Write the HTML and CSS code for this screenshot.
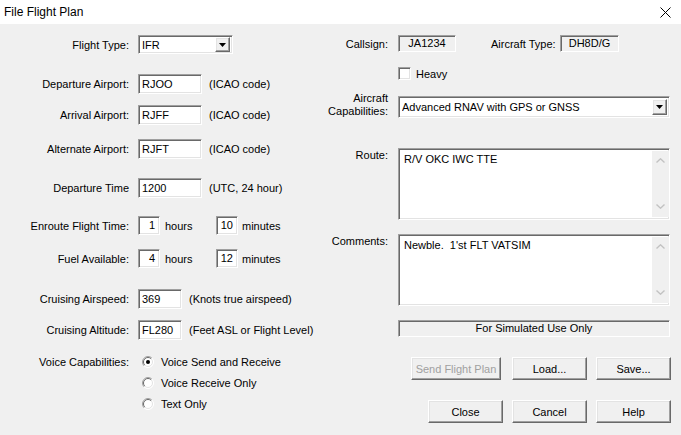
FILE: index.html
```html
<!DOCTYPE html>
<html>
<head>
<meta charset="utf-8">
<link rel="stylesheet" href="styles.css">
</head>
<body>
<div class="window">
  <div class="titlebar">
    <span class="title">File Flight Plan</span>
    <svg class="closex" width="11" height="11" viewBox="0 0 11 11"><path d="M0.5 0.5 L10.5 10.5 M10.5 0.5 L0.5 10.5" stroke="#000" stroke-width="1" fill="none"/></svg>
  </div>
  <div class="body">
    <div class="left">
      <div class="row r-ft">
        <span class="lbl">Flight Type:</span>
        <div class="sunken select sel-ft"><span class="val">IFR</span><span class="arrowbtn"><svg width="7" height="4" viewBox="0 0 7 4"><path d="M0 0 H7 L3.5 4 Z" fill="#000"/></svg></span></div>
      </div>
      <div class="row r-dep">
        <span class="lbl">Departure Airport:</span>
        <div class="sunken input w64">RJOO</div><span class="hint">(ICAO code)</span>
      </div>
      <div class="row r-arr">
        <span class="lbl">Arrival Airport:</span>
        <div class="sunken input w64">RJFF</div><span class="hint">(ICAO code)</span>
      </div>
      <div class="row r-alt">
        <span class="lbl">Alternate Airport:</span>
        <div class="sunken input w64">RJFT</div><span class="hint">(ICAO code)</span>
      </div>
      <div class="row r-time">
        <span class="lbl">Departure Time</span>
        <div class="sunken input w64">1200</div><span class="hint">(UTC, 24 hour)</span>
      </div>
      <div class="row r-enr">
        <span class="lbl">Enroute Flight Time:</span>
        <div class="sunken input small">1</div><span class="unit">hours</span>
        <div class="sunken input small">10</div><span class="unit2">minutes</span>
      </div>
      <div class="row r-fuel">
        <span class="lbl">Fuel Available:</span>
        <div class="sunken input small">4</div><span class="unit">hours</span>
        <div class="sunken input small">12</div><span class="unit2">minutes</span>
      </div>
      <div class="row r-spd">
        <span class="lbl">Cruising Airspeed:</span>
        <div class="sunken input w44">369</div><span class="hint">(Knots true airspeed)</span>
      </div>
      <div class="row r-fl">
        <span class="lbl">Cruising Altitude:</span>
        <div class="sunken input w44">FL280</div><span class="hint">(Feet ASL or Flight Level)</span>
      </div>
      <div class="row r-v1">
        <span class="lbl">Voice Capabilities:</span>
        <span class="radio"><svg width="12" height="12" viewBox="0 0 12 12"><circle cx="6" cy="6" r="5.5" fill="#fff"/><path d="M2.1 9.9 A5.5 5.5 0 0 1 9.9 2.1" stroke="#a0a0a0" fill="none"/><path d="M2.8 9.2 A4.5 4.5 0 0 1 9.2 2.8" stroke="#696969" fill="none"/><path d="M9.9 2.1 A5.5 5.5 0 0 1 2.1 9.9" stroke="#fff" fill="none"/><path d="M9.2 2.8 A4.5 4.5 0 0 1 2.8 9.2" stroke="#e3e3e3" fill="none"/><circle cx="6" cy="6" r="2" fill="#000"/></svg></span>
        <span class="rtext">Voice Send and Receive</span>
      </div>
      <div class="row r-v2">
        <span class="lbl"></span>
        <span class="radio"><svg width="12" height="12" viewBox="0 0 12 12"><circle cx="6" cy="6" r="5.5" fill="#fff"/><path d="M2.1 9.9 A5.5 5.5 0 0 1 9.9 2.1" stroke="#a0a0a0" fill="none"/><path d="M2.8 9.2 A4.5 4.5 0 0 1 9.2 2.8" stroke="#696969" fill="none"/><path d="M9.9 2.1 A5.5 5.5 0 0 1 2.1 9.9" stroke="#fff" fill="none"/><path d="M9.2 2.8 A4.5 4.5 0 0 1 2.8 9.2" stroke="#e3e3e3" fill="none"/></svg></span>
        <span class="rtext">Voice Receive Only</span>
      </div>
      <div class="row r-v3">
        <span class="lbl"></span>
        <span class="radio"><svg width="12" height="12" viewBox="0 0 12 12"><circle cx="6" cy="6" r="5.5" fill="#fff"/><path d="M2.1 9.9 A5.5 5.5 0 0 1 9.9 2.1" stroke="#a0a0a0" fill="none"/><path d="M2.8 9.2 A4.5 4.5 0 0 1 9.2 2.8" stroke="#696969" fill="none"/><path d="M9.9 2.1 A5.5 5.5 0 0 1 2.1 9.9" stroke="#fff" fill="none"/><path d="M9.2 2.8 A4.5 4.5 0 0 1 2.8 9.2" stroke="#e3e3e3" fill="none"/></svg></span>
        <span class="rtext">Text Only</span>
      </div>
    </div>

    <div class="right">
      <div class="row r-cs">
        <span class="rlbl">Callsign:</span>
        <div class="static cs">JA1234</div>
        <span class="actype">Aircraft Type:</span>
        <div class="static at">DH8D/G</div>
      </div>
      <div class="row r-heavy">
        <span class="chk"></span><span class="chktext">Heavy</span>
      </div>
      <div class="row r-caps">
        <span class="rlbl caps-lbl">Aircraft<br>Capabilities:</span>
        <div class="sunken select sel-caps"><span class="val">Advanced RNAV with GPS or GNSS</span><span class="arrowbtn"><svg width="7" height="4" viewBox="0 0 7 4"><path d="M0 0 H7 L3.5 4 Z" fill="#000"/></svg></span></div>
      </div>
      <div class="row r-route">
        <span class="rlbl top-lbl">Route:</span>
        <div class="sunken textarea">
          <div class="ta-text">R/V OKC IWC TTE</div>
          <div class="sb">
            <svg width="9" height="5" viewBox="0 0 9 5"><path d="M0.5 4.5 L4.5 0.8 L8.5 4.5" stroke="#c2c2c2" stroke-width="1.4" fill="none"/></svg>
            <svg width="9" height="5" viewBox="0 0 9 5"><path d="M0.5 0.5 L4.5 4.2 L8.5 0.5" stroke="#c2c2c2" stroke-width="1.4" fill="none"/></svg>
          </div>
        </div>
      </div>
      <div class="row r-comm">
        <span class="rlbl top-lbl">Comments:</span>
        <div class="sunken textarea">
          <div class="ta-text">Newble.&nbsp; 1'st FLT VATSIM</div>
          <div class="sb">
            <svg width="9" height="5" viewBox="0 0 9 5"><path d="M0.5 4.5 L4.5 0.8 L8.5 4.5" stroke="#c2c2c2" stroke-width="1.4" fill="none"/></svg>
            <svg width="9" height="5" viewBox="0 0 9 5"><path d="M0.5 0.5 L4.5 4.2 L8.5 0.5" stroke="#c2c2c2" stroke-width="1.4" fill="none"/></svg>
          </div>
        </div>
      </div>
      <div class="row r-sim">
        <div class="static sim">For Simulated Use Only</div>
      </div>
      <div class="btnrow b1">
        <div class="btn disabled send">Send Flight Plan</div>
        <div class="btn load">Load...</div>
        <div class="btn">Save...</div>
      </div>
      <div class="btnrow b2">
        <div class="btn">Close</div>
        <div class="btn">Cancel</div>
        <div class="btn">Help</div>
      </div>
    </div>
  </div>
</div>
</body>
</html>
```

FILE: styles.css
```css
* { box-sizing: border-box; }
html, body { margin: 0; padding: 0; }
body {
  font-family: "Liberation Sans", Arial, sans-serif;
  font-size: 11px;
  color: #000;
  background: #f0f0f0;
}
.window {
  width: 681px;
  height: 435px;
  background: #f0f0f0;
  overflow: hidden;
}
.titlebar {
  height: 24px;
  background: #fff;
  display: flex;
  align-items: center;
  justify-content: space-between;
  padding: 0 10px 0 4px;
}
.title { font-size: 12px; color: #000; }
.closex { display: block; }

.body { display: flex; }

/* left column */
.left {
  width: 328px;
  flex: none;
  padding-top: 11px;
  display: flex;
  flex-direction: column;
}
.row { display: flex; align-items: center; }
.lbl {
  width: 129px;
  flex: none;
  text-align: right;
  margin-right: 9px;
  white-space: nowrap;
}
.r-ft { height: 19px; }
.r-dep { height: 20px; margin-top: 20px; }
.r-arr { height: 20px; margin-top: 11px; }
.r-alt { height: 20px; margin-top: 14px; }
.r-time { height: 20px; margin-top: 19px; }
.r-enr { height: 19px; margin-top: 18px; }
.r-fuel { height: 19px; margin-top: 14px; }
.r-spd { height: 20px; margin-top: 21px; }
.r-fl { height: 20px; margin-top: 11px; }
.r-v1 { height: 20px; margin-top: 12px; }
.r-v2 { height: 20px; margin-top: 1px; }
.r-v3 { height: 20px; margin-top: 1px; }

.sunken {
  background: #fff;
  border: 1px solid;
  border-color: #a0a0a0 #fff #fff #a0a0a0;
  box-shadow: inset 1px 1px #696969, inset -1px -1px #e3e3e3;
}
.input {
  height: 20px;
  line-height: 18px;
  padding: 0 3px;
  white-space: nowrap;
}
.w64 { width: 64px; }
.w44 { width: 44px; }
.small { width: 22px; height: 19px; line-height: 17px; text-align: right; padding: 0 4px 0 2px; }
.hint { margin-left: 7px; white-space: nowrap; }
.unit { width: 56px; flex: none; padding-left: 5px; }
.unit2 { padding-left: 4px; }

.select {
  display: flex;
  align-items: center;
  padding: 0 2px 0 3px;
}
.select .val { flex: 1; white-space: nowrap; overflow: hidden; }
.sel-ft { width: 95px; height: 19px; }
.sel-caps { width: 272px; height: 22px; }
.arrowbtn {
  width: 15px;
  height: 15px;
  flex: none;
  display: flex;
  align-items: center;
  justify-content: center;
  background: #f0f0f0;
  border: 1px solid;
  border-color: #fff #696969 #696969 #fff;
  box-shadow: inset -1px -1px #a0a0a0, inset 1px 1px #e3e3e3;
}
.sel-caps .arrowbtn { height: 16px; }
.arrowbtn svg { display: block; }

.radio { width: 12px; height: 12px; margin-left: 4px; flex: none; }
.radio svg { display: block; }
.rtext { margin-left: 7px; white-space: nowrap; }

/* right column */
.right {
  flex: 1;
  padding-top: 11px;
  display: flex;
  flex-direction: column;
}
.rlbl {
  width: 60px;
  flex: none;
  text-align: right;
  margin-right: 10px;
  white-space: nowrap;
}
.static {
  background: #f0f0f0;
  border: 1px solid;
  border-color: #a0a0a0 #fff #fff #a0a0a0;
  box-shadow: inset 1px 1px #696969;
  text-align: center;
  white-space: nowrap;
}
.r-cs { height: 17px; }
.cs { width: 58px; height: 17px; line-height: 15px; margin-left: 0; }
.actype { margin-left: 35px; width: 67px; white-space: nowrap; }
.at { width: 59px; height: 17px; line-height: 15px; margin-left: 2px; }

.r-heavy { height: 13px; margin-top: 15px; padding-left: 70px; }
.chk {
  width: 13px;
  height: 13px;
  flex: none;
  background: #fff;
  border: 1px solid;
  border-color: #a0a0a0 #fff #fff #a0a0a0;
  box-shadow: inset 1px 1px #696969, inset -1px -1px #e3e3e3;
}
.chktext { margin-left: 5px; }

.r-caps { margin-top: 16px; align-items: flex-start; }
.caps-lbl { line-height: 13px; margin-top: -4px; }

.r-route { margin-top: 30px; align-items: flex-start; }
.r-comm { margin-top: 14px; align-items: flex-start; }
.top-lbl { line-height: 13px; padding-top: 1px; }
.textarea {
  width: 272px;
  height: 72px;
  display: flex;
  padding: 2px 0 2px 2px;
}
.ta-text { flex: 1; padding: 2px 3px; line-height: 13px; white-space: nowrap; }
.sb {
  width: 17px;
  flex: none;
  background: #f0f0f0;
  display: flex;
  flex-direction: column;
  justify-content: space-between;
  align-items: center;
  padding: 7px 0 8px;
}
.sb svg { display: block; }

.r-sim { margin-top: 14px; padding-left: 70px; }
.sim { width: 272px; height: 17px; line-height: 15px; }

.btnrow {
  display: flex;
  justify-content: flex-end;
  gap: 9px;
  padding-right: 10px;
}
.b1 { margin-top: 20px; }
.b2 { margin-top: 20px; }
.btn {
  width: 75px;
  height: 23px;
  display: flex;
  align-items: center;
  justify-content: center;
  background: #f0f0f0;
  border: 1px solid;
  border-color: #fff #696969 #696969 #fff;
  box-shadow: inset -1px -1px #a0a0a0, inset 1px 1px #e3e3e3;
  white-space: nowrap;
}
.btn.send { width: 90px; margin-right: 2px; }
.btn.disabled { color: #a0a0a0; }
```
